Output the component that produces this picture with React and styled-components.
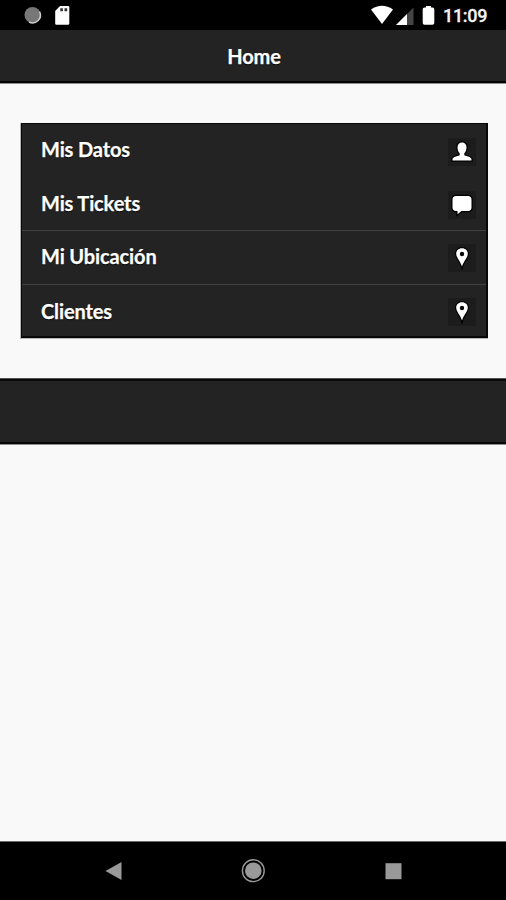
import React from "react";
import styled, { createGlobalStyle } from "styled-components";

const GlobalStyle = createGlobalStyle`
  * { box-sizing: border-box; }
  body { margin: 0; background: #f9f9f9; font-family: Lato, sans-serif; }
`;

const Screen = styled.div`
  width: 506px;
  height: 900px;
  display: flex;
  flex-direction: column;
  background: #f9f9f9;
  overflow: hidden;
`;

const StatusBar = styled.div`
  height: 30px;
  flex: none;
  display: flex;
  justify-content: space-between;
  background: #000;
`;

const StatusIcons = styled.svg`
  display: block;
  height: 30px;
  width: ${(p) => p.$width}px;
`;

const StatusGroup = styled.div`
  display: flex;
`;

const Clock = styled.time`
  width: 64px;
  padding-left: 1px;
  color: #f2f2f2;
  font: 500 18px/32px Roboto, sans-serif;
  letter-spacing: -0.3px;
  -webkit-text-stroke: 0.3px #f2f2f2;
`;

const Header = styled.header`
  height: 54px;
  flex: none;
  padding-left: 2px;
  background: #232323;
  border-bottom: 1px solid #8c8c8c;
  box-shadow: inset 0 -2px #050505;
`;

const Title = styled.h1`
  margin: 0;
  color: #fff;
  font-size: 20px;
  line-height: 53px;
  font-weight: 700;
  letter-spacing: -0.15px;
  text-align: center;
  text-shadow: 0 1px 1px #000;
  -webkit-text-stroke: 0.25px #fff;
`;

const Menu = styled.ul`
  list-style: none;
  margin: 39px 18px 39px 20px;
  padding: 1px 2px 2px 1px;
  height: 216px;
  flex: none;
  display: grid;
  grid-template-rows: 53px 54px 54px 51px;
  background: #080808;
  border: 0 solid #b5b5b5;
  border-left-width: 1px;
  border-bottom-width: 1px;
`;

const MenuItem = styled.li`
  display: flex;
  align-items: center;
  justify-content: space-between;
  padding: 0 10px 0 19px;
  background: #232323;
  border-bottom: ${(p) => (p.$divided ? "1px solid #414141" : "0")};
`;

const Label = styled.span`
  color: #fff;
  font-size: 20px;
  line-height: 28px;
  font-weight: 700;
  letter-spacing: -0.13px;
  margin-bottom: ${(p) => p.$lift}px;
  text-shadow: 0 1px 1px #000;
  -webkit-text-stroke: 0.25px #fff;
`;

const IconPlate = styled.span`
  width: 28px;
  height: 28px;
  margin-top: ${(p) => p.$drop}px;
  display: flex;
  background: #1c1c1c;
  svg { display: block; width: 28px; height: 28px; overflow: visible; }
`;

const Footer = styled.footer`
  height: 67px;
  flex: none;
  background: #232323;
  border-top: 1px solid #505050;
  border-bottom: 1px solid #8c8c8c;
  box-shadow: inset 0 2px #080808, inset 0 -2px #080808;
`;

const NavBar = styled.nav`
  height: 59px;
  margin-top: auto;
  flex: none;
  background: #000;
  border-top: 1px solid #6a6a6a;
  svg { display: block; }
`;

const iconStroke = { fill: "#fff", stroke: "#000", strokeWidth: 2.5, paintOrder: "stroke" };

function PersonIcon() {
  return (
    <svg viewBox="0 0 28 28">
      <path {...iconStroke} d="M14 4.500c3 0 4.500 2 4.500 5 0 2.700-1 4.500-2.200 5.800v2c2.900 1.100 7.200 1.700 7.200 4.200v1H4.500v-1c0-2.500 4.300-3.100 7.200-4.200v-2C10.500 14 9.500 12.200 9.500 9.500c0-3 1.500-5 4.500-5Z" />
    </svg>
  );
}

function BubbleIcon() {
  return (
    <svg viewBox="0 0 28 28">
      <path {...iconStroke} d="M8 5h12c2.300 0 3.500 1.200 3.500 3.500v8c0 2.300-1.200 3.500-3.500 3.500h-6.500L9.500 23.200V20H8c-2.300 0-3.500-1.200-3.500-3.500v-8C4.500 6.200 5.700 5 8 5Z" />
    </svg>
  );
}

function PinIcon() {
  return (
    <svg viewBox="0 0 28 28">
      <path {...iconStroke} d="M14 4.300c3.500 0 5.800 2.300 5.800 5.500 0 3.800-4 7-5.800 12.700-1.800-5.700-5.800-8.900-5.800-12.700 0-3.200 2.300-5.500 5.800-5.500Z" />
      <circle cx="14" cy="10" r="2.200" fill="#080808" />
    </svg>
  );
}

const items = [
  { label: "Mis Datos", Icon: PersonIcon, divided: false, lift: 3, drop: 2 },
  { label: "Mis Tickets", Icon: BubbleIcon, divided: true, lift: 1, drop: 2 },
  { label: "Mi Ubicación", Icon: PinIcon, divided: true, lift: 3, drop: 0 },
  { label: "Clientes", Icon: PinIcon, divided: false, lift: 0, drop: 2 },
];

export default function App() {
  return (
    <Screen>
      <GlobalStyle />
      <StatusBar>
        <StatusIcons $width={90} viewBox="0 0 90 30">
          <circle cx="32.500" cy="15" r="8" fill="#777" />
          <path d="M39.500 11.500A7.800 7.800 0 0 1 29 22" fill="none" stroke="#ccc" strokeWidth="1.500" />
          <path d="M60 6h8q1.300 0 1.300 1.300v16q0 1.500-1.300 1.500H56.500q-1.300 0-1.300-1.500V11Z" fill="#fff" />
          <path d="M60.300 8.300h2.600v3h-2.600zM64.500 8.300h2.700v3h-2.700z" fill="#333" />
        </StatusIcons>
        <StatusGroup>
          <StatusIcons $width={72} viewBox="370 0 72 30">
            <path d="M371 9.500Q382 2 393 9.500L382 24Z" fill="#fff" />
            <path d="M413.500 7.500V25H396Z" fill="#444" />
            <path d="M407 14v11H396Z" fill="#fff" />
            <path d="M426 7.500V6h5v1.500h1.500q1.800 0 1.800 1.800v13.700q0 1.800-1.800 1.800h-8q-1.800 0-1.800-1.800V9.300q0-1.800 1.800-1.800Z" fill="#fff" />
          </StatusIcons>
          <Clock>11:09</Clock>
        </StatusGroup>
      </StatusBar>
      <Header>
        <Title>Home</Title>
      </Header>
      <Menu>
        {items.map(({ label, Icon, divided, lift, drop }) => (
          <MenuItem key={label} $divided={divided}>
            <Label $lift={lift}>{label}</Label>
            <IconPlate $drop={drop}><Icon /></IconPlate>
          </MenuItem>
        ))}
      </Menu>
      <Footer />
      <NavBar>
        <svg width="506" height="58" viewBox="0 842 506 58">
          <path d="M105.500 871 121.500 862V880Z" fill="#999" />
          <circle cx="253.300" cy="870.700" r="10.900" fill="none" stroke="#999" strokeWidth="1.400" />
          <circle cx="253.300" cy="870.700" r="8.300" fill="#999" />
          <path d="M385.500 863.200h16v16h-16z" fill="#999" />
        </svg>
      </NavBar>
    </Screen>
  );
}
